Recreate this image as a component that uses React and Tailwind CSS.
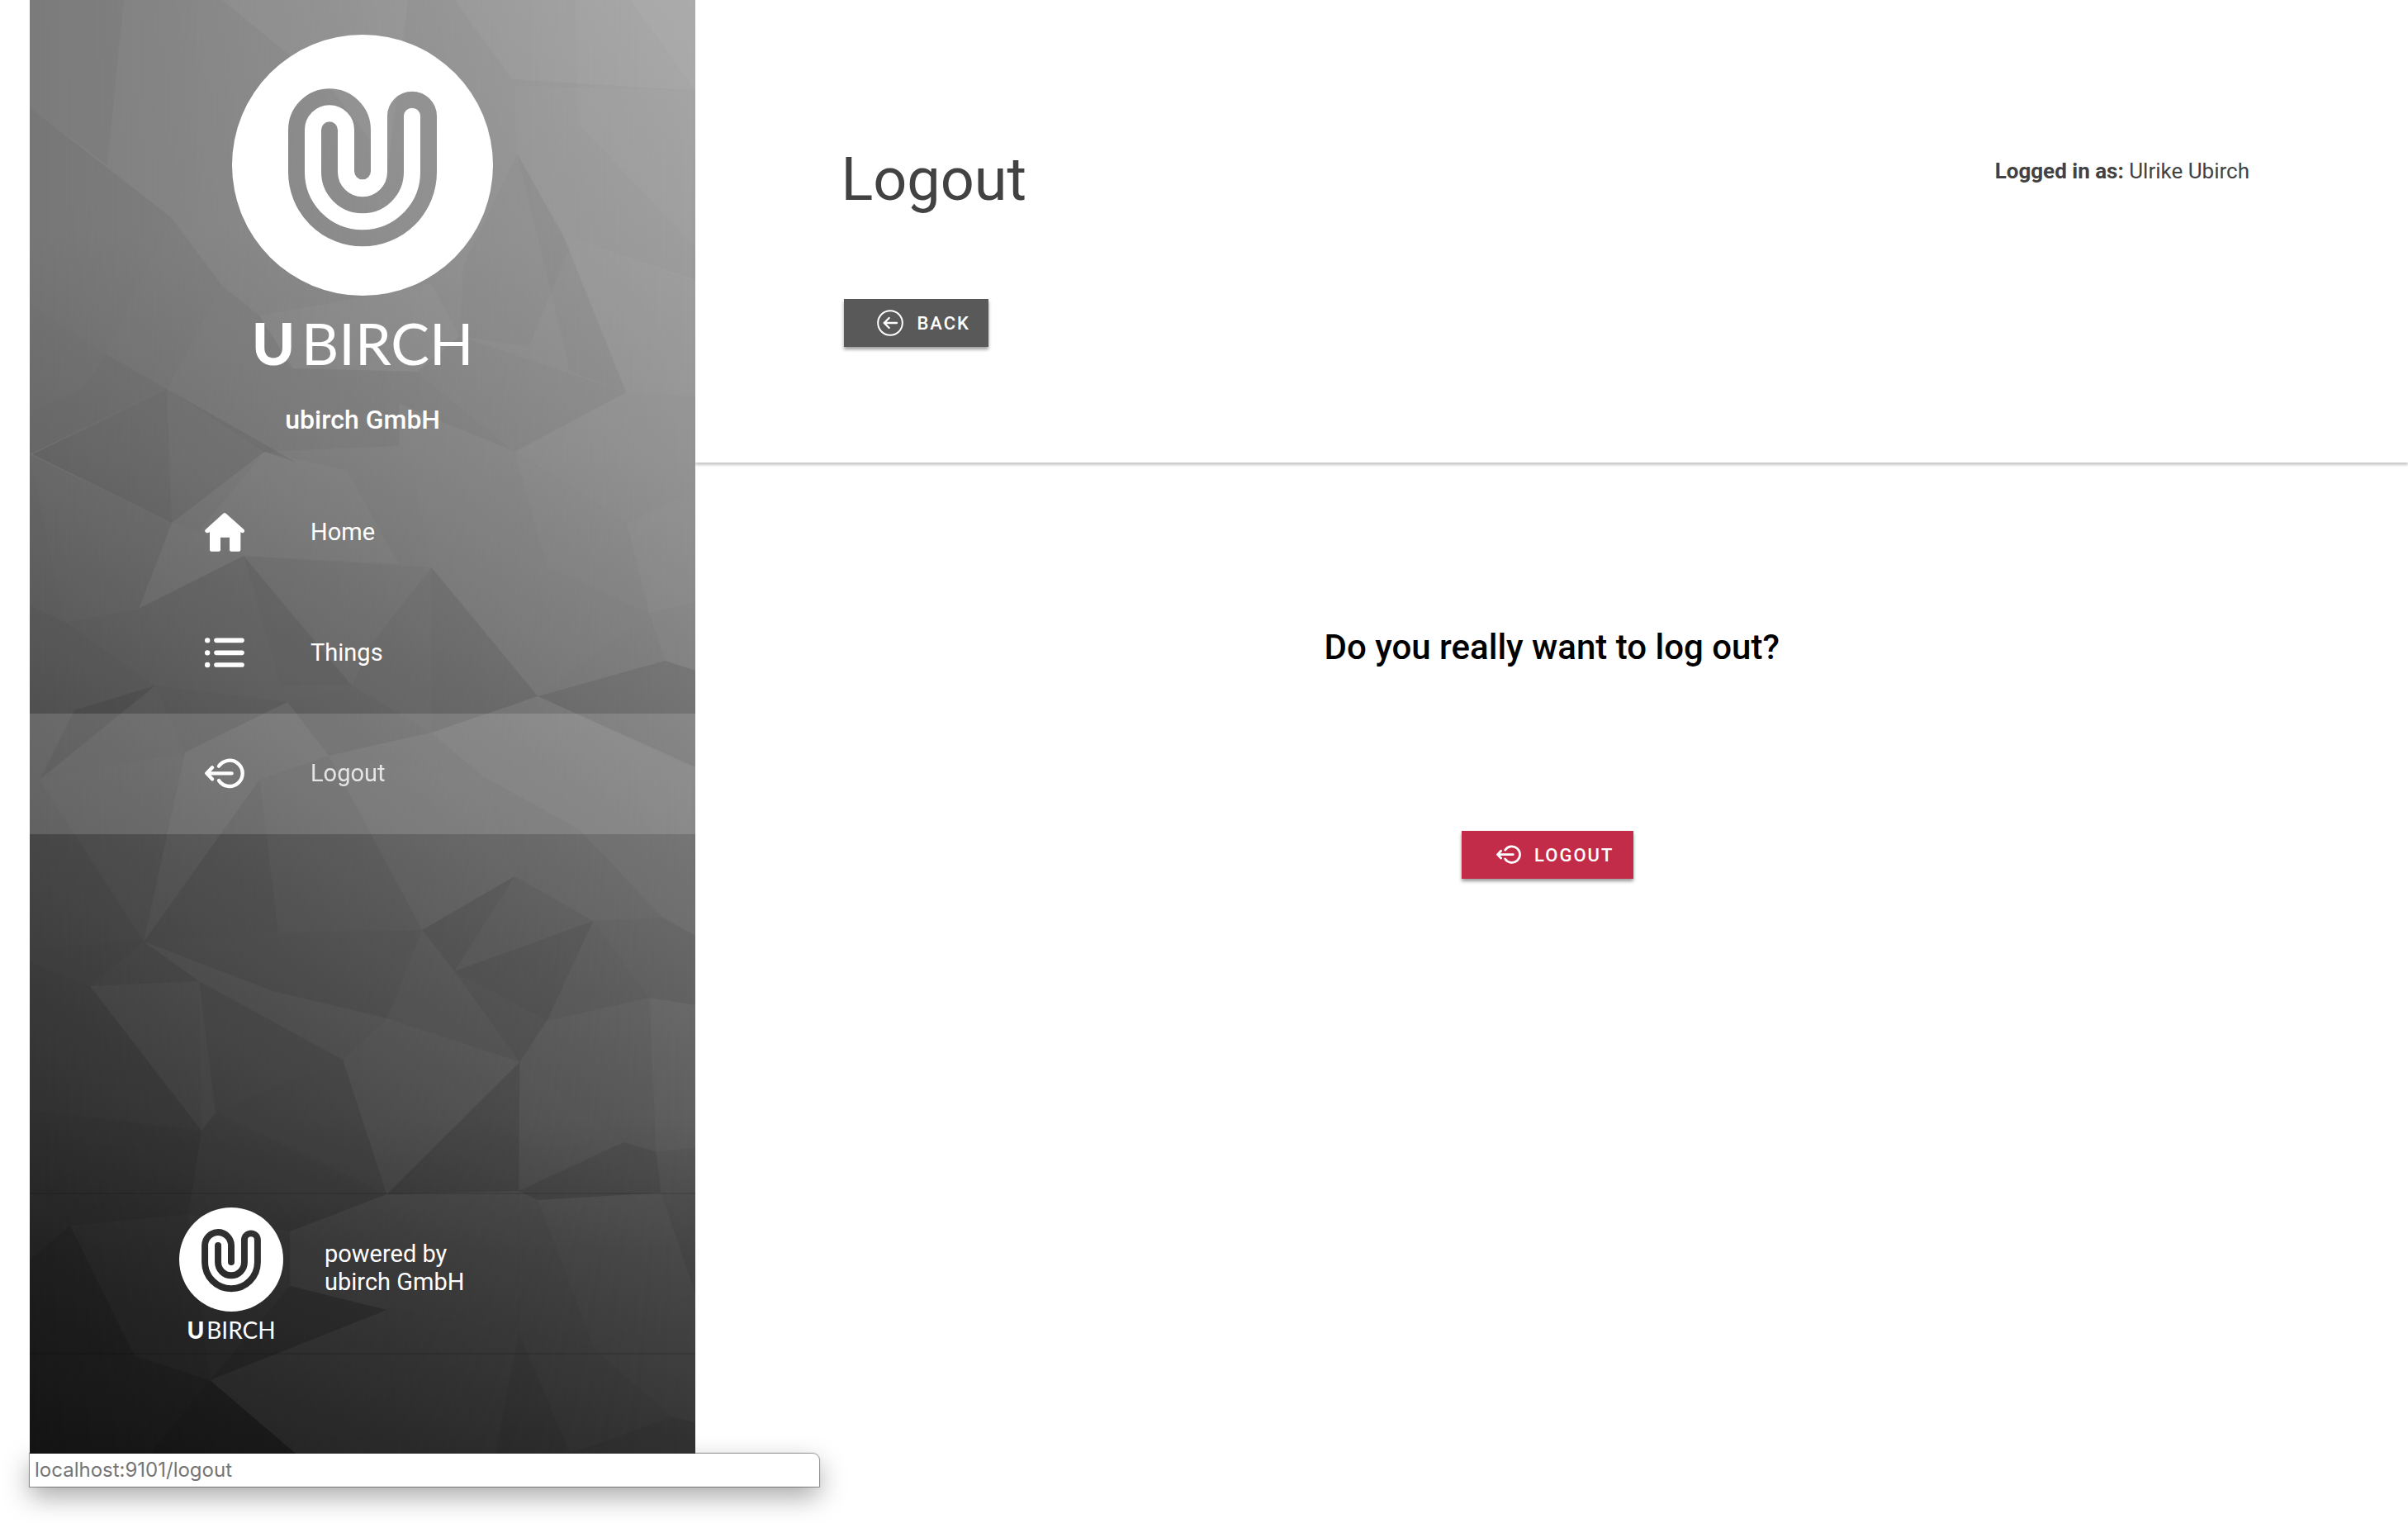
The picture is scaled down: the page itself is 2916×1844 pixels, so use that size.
import React from "react";

// Facets of the low-poly backdrop: [polygon points, tone], tone < 0 darkens.
const FACETS = [
  ["36,130 208,264 129,429 36,368", -4],
  ["208,264 269,346 202,471 129,429", -3],
  ["269,0 494,0 470,200 404,111", 3],
  ["36,0 150,0 130,200 36,130", -2],
  ["550,0 842,0 842,110 620,96", 3],
  ["763,0 842,0 842,110", 4],
  ["696,0 763,0 842,110 842,300 700,150", 2],
  ["623,104 842,110 836,339 682,286 626,186", 2],
  ["682,286 842,339 842,480 758,475", 3],
  ["682,286 758,475 690,450 626,186", -1],
  ["561,321 626,186 690,300 640,420 556,407", -1],
  ["432,361 522,343 556,407 505,450 354,446 314,382", 2],
  ["269,346 314,382 354,446 320,547 202,471", -2],
  ["36,368 129,429 100,470 36,500", -4],
  ["129,429 202,471 36,550 36,500 100,470", -5],
  ["202,471 359,560 320,547 208,633 39,550", -4],
  ["202,471 208,633 39,550", -2],
  ["354,446 505,450 483,489 483,540 320,547", -2],
  ["556,407 758,475 623,547 505,450", -1],
  ["505,450 623,547 483,489", -2],
  ["758,475 842,480 842,593 758,633 623,547", 2],
  ["483,489 623,547 662,687 522,687", 0.5],
  ["36,550 208,633 168,737 79,753", -3],
  ["36,550 79,753 36,733", -4],
  ["208,633 241,643 295,673 168,737", 1],
  ["320,547 420,570 483,683 295,673 241,643", 2],
  ["168,737 295,673 426,830 348,850 188,830", -4],
  ["295,673 426,830 340,830", -1],
  ["36,733 79,753 188,830 90,860 36,830", -5],
  ["79,753 168,737 188,830", -4],
  ["36,830 90,860 188,830 48,944 36,944", -5],
  ["522,687 522,887 426,830 449,780", -3],
  ["522,687 651,843 522,887", -4],
  ["295,673 522,687 449,780 426,830", -1],
  ["522,687 662,687 786,743 651,843", 0.5],
  ["662,687 623,547 758,633 786,743", 1.5],
  ["758,633 842,593 842,730 786,743", 3],
  ["786,743 842,730 842,812 805,800", 2],
  ["651,843 805,800 842,812 842,929", -4],
  ["188,830 348,850 224,911", -5],
  ["188,830 224,911 48,944 90,860", -4],
  ["348,850 426,830 522,887 398,915", -4],
  ["224,911 174,1140 48,944", -3],
  ["314,944 337,1129 174,1140", -4],
  ["314,944 398,915 511,1126 337,1129", -2],
  ["36,944 48,944 174,1140 36,1147", -5],
  ["398,915 584,940 623,1061 511,1126", 0.5],
  ["522,887 651,843 836,929 701,1004 584,940", 2],
  ["701,1004 836,929 842,1133 802,1111", 2],
  ["511,1126 623,1061 550,1176", -4],
  ["623,1061 718,1115 550,1176", -2],
  ["718,1115 662,1236 550,1176", -5],
  ["718,1115 786,1208 662,1236", -2],
  ["718,1115 802,1111 842,1133 842,1217 786,1208", -1],
  ["36,1147 174,1140 109,1194 36,1165", -5],
  ["174,1140 337,1129 469,1233 330,1200", -3],
  ["174,1140 241,1188 109,1194", -4],
  ["337,1129 511,1126 469,1233", -3],
  ["511,1126 550,1176 469,1233", -1],
  ["36,1165 109,1194 244,1369 36,1344", -6],
  ["109,1194 241,1188 244,1369", -1],
  ["241,1188 415,1283 261,1347", -3],
  ["261,1347 415,1283 468,1446", -3],
  ["469,1233 629,1286 468,1446 415,1283", 1],
  ["469,1233 550,1176 662,1236 629,1286", -1],
  ["550,1176 662,1236 629,1286", -2],
  ["629,1286 628,1442 468,1446", -4],
  ["629,1286 755,1383 628,1442", 0.5],
  ["755,1383 651,1453 628,1442", -3],
  ["786,1208 842,1217 842,1390 794,1394", 2],
  ["755,1383 794,1394 800,1444 651,1453", -3],
  ["36,1344 244,1369 228,1470 85,1484 36,1439", -7],
  ["261,1347 468,1446 351,1491 228,1470 244,1369", -4],
  ["85,1484 228,1470 254,1671 163,1642", -4],
  ["36,1439 85,1484 36,1525", -6],
  ["36,1525 85,1484 163,1642 36,1647", -9],
  ["228,1470 351,1491 351,1557 254,1671", -2],
  ["351,1491 468,1446 468,1586 351,1557", 1.5],
  ["468,1446 628,1442 628,1614 468,1586", 1],
  ["628,1442 651,1453 719,1633 628,1614", 1],
  ["651,1453 800,1444 842,1567 719,1633", 2],
  ["351,1557 468,1586 254,1671", -5],
  ["36,1647 163,1642 254,1671 182,1760 36,1760", -8],
  ["254,1671 358,1760 182,1760", -10],
  ["254,1671 468,1586 481,1760 358,1760", 1],
  ["468,1586 628,1614 600,1760 481,1760", 1],
  ["628,1614 719,1633 813,1716 690,1760", 1],
  ["719,1633 842,1567 842,1722 813,1716", 2],
];

// The gradient gets darker downwards, so dark facets need more weight there.
function facetOpacity(points, tone) {
  const y = Number(points.split(" ")[0].split(",")[1]);
  return tone < 0 ? -tone * (0.012 + 0.016 * (y / 1760)) : tone * 0.014;
}

function Backdrop() {
  return (
    <svg
      className="absolute inset-0 -z-10 h-full w-full"
      viewBox="36 0 806 1760"
      preserveAspectRatio="none"
      aria-hidden="true"
    >
      <defs>
        <linearGradient id="bg-left" x1="0" y1="0" x2="0" y2="1">
          <stop offset="0" stopColor="#7e7e7e" />
          <stop offset="0.16" stopColor="#7e7e7e" />
          <stop offset="0.31" stopColor="#707070" />
          <stop offset="0.49" stopColor="#595959" />
          <stop offset="0.65" stopColor="#474747" />
          <stop offset="0.77" stopColor="#393939" />
          <stop offset="0.86" stopColor="#292929" />
          <stop offset="1" stopColor="#1a1a1a" />
        </linearGradient>
        <linearGradient id="bg-right" x1="0" y1="0" x2="0" y2="1">
          <stop offset="0" stopColor="#a4a4a4" />
          <stop offset="0.16" stopColor="#9c9c9c" />
          <stop offset="0.31" stopColor="#919191" />
          <stop offset="0.49" stopColor="#7d7d7d" />
          <stop offset="0.65" stopColor="#6a6a6a" />
          <stop offset="0.77" stopColor="#5b5b5b" />
          <stop offset="0.86" stopColor="#454545" />
          <stop offset="1" stopColor="#303030" />
        </linearGradient>
        <linearGradient id="bg-fade" x1="0" y1="0" x2="1" y2="0">
          <stop offset="0" stopColor="#000" />
          <stop offset="1" stopColor="#fff" />
        </linearGradient>
        <mask id="bg-mask" style={{ maskType: "luminance" }}>
          <rect x="36" width="806" height="1760" fill="url(#bg-fade)" />
        </mask>
      </defs>
      <rect x="36" width="806" height="1760" fill="url(#bg-left)" />
      <rect x="36" width="806" height="1760" fill="url(#bg-right)" mask="url(#bg-mask)" />
      {FACETS.map(([points, tone]) => (
        <polygon
          key={points}
          points={points}
          fill={tone < 0 ? "#000" : "#fff"}
          fillOpacity={facetOpacity(points, tone)}
        />
      ))}
    </svg>
  );
}

function Mark({ id, className }) {
  return (
    <svg className={className} viewBox="63 36 948 948" aria-hidden="true">
      <mask id={id}>
        <circle cx="537" cy="510" r="474" fill="#fff" />
        <path
          d="M417 382V535A120 120 0 0 0 657 535V332A60 60 0 0 1 777 332V535A240 240 0 0 1 297 535V382A120 120 0 0 1 537 382V532"
          fill="none"
          stroke="#000"
          strokeWidth="60"
          strokeLinecap="round"
        />
      </mask>
      <rect x="63" y="36" width="948" height="948" fill="#fff" mask={`url(#${id})`} />
    </svg>
  );
}

function HomeIcon() {
  return (
    <svg className="size-12" viewBox="144 122 144 144" fill="currentColor" aria-hidden="true">
      <path d="M211 124q5-4 10 0l64 57q5 5 2 10t-9 3l-4-2v64q0 6-6 6h-28q-6 0-6-6v-45h-33v45q0 6-6 6h-27q-6 0-6-6v-64l-6 2q-6 2-10-3t2-10z" />
    </svg>
  );
}

function ListIcon() {
  return (
    <svg className="size-12" viewBox="144 560 144 144" aria-hidden="true">
      <g stroke="currentColor" strokeLinecap="round">
        <path d="M153.500 585v.1M153.500 630v.1M153.500 674v.1" strokeWidth="19" />
        <path d="M186 585H279M186 630H279M186 674H279" strokeWidth="17" />
      </g>
    </svg>
  );
}

function LogoutIcon({ className }) {
  return (
    <svg className={className} viewBox="144 998 144 144" fill="none" aria-hidden="true">
      <g stroke="currentColor" strokeWidth="13" strokeLinecap="round" strokeLinejoin="round">
        <path d="M195 1042A47 47 0 1 1 195 1094" />
        <path d="M153 1068H242M171 1047L151 1068L171 1089" />
      </g>
    </svg>
  );
}

function BackIcon() {
  return (
    <svg className="size-8" viewBox="246 675 96 96" fill="none" aria-hidden="true">
      <g stroke="currentColor" strokeLinecap="round" strokeLinejoin="round">
        <circle cx="294" cy="723" r="44.500" strokeWidth="6" />
        <path d="M272 723H318M290 705L272 723L290 741" strokeWidth="7" />
      </g>
    </svg>
  );
}

const NAV = [
  { label: "Home", icon: <HomeIcon /> },
  { label: "Things", icon: <ListIcon /> },
  { label: "Logout", icon: <LogoutIcon className="size-12" />, active: true },
];

export default function App() {
  return (
    <div className="flex min-h-screen flex-col bg-white pb-11 pl-9 font-['Roboto',sans-serif] text-[#424242]">
      <div className="flex flex-1">
        <aside className="relative isolate z-10 flex w-[28%] flex-col text-white">
          <Backdrop />
          <div className="flex flex-col items-center pt-[42px]">
            <Mark id="mark-large" className="size-[316px]" />
            <p className="mt-5 font-['Lato',sans-serif] text-[70px] leading-[74px]">
              <span className="mr-2 font-black">U</span>BIRCH
            </p>
            <h2 className="mt-9 text-[32px] leading-10 font-medium">ubirch GmbH</h2>
          </div>
          <nav className="mt-11">
            {NAV.map(({ label, icon, active }) => (
              <a
                key={label}
                href={`#${label.toLowerCase()}`}
                aria-current={active ? "page" : undefined}
                className={`flex h-[146px] items-center gap-20 pl-[212px] text-[29px] ${active ? "bg-white/15" : ""}`}
              >
                {icon}
                <span className={active ? "opacity-80" : ""}>{label}</span>
              </a>
            ))}
          </nav>
          <footer className="mt-auto mb-[120px] flex gap-[50px] border-y-2 border-black/10 pt-4 pl-[181px]">
            <div className="flex flex-col items-center">
              <Mark id="mark-small" className="size-[126px]" />
              <p className="mt-[6px] mb-3 font-['Lato',sans-serif] text-[28px] leading-8">
                <span className="mr-[3px] font-black">U</span>BIRCH
              </p>
            </div>
            <p className="pt-[39px] text-[29px] leading-[34px]">
              powered by
              <br />
              ubirch GmbH
            </p>
          </footer>
        </aside>
        <div className="flex flex-1 flex-col">
          <header className="flex h-[560px] items-start justify-between pr-48 pl-[180px] shadow-[0_3px_3px_rgba(0,0,0,0.22)]">
            <div className="pt-[170px]">
              <h1 className="-ml-1 text-[72px] leading-[96px]">Logout</h1>
              <button
                type="button"
                className="mt-24 flex h-[58px] items-center gap-4 bg-[#595959] pr-[22px] pl-10 text-[22px] font-medium tracking-[2px] text-white shadow-[0_3px_4px_rgba(0,0,0,0.4)]"
              >
                <BackIcon />
                BACK
              </button>
            </div>
            <p className="pt-[189px] text-[26px] leading-9">
              <b>Logged in as:</b> Ulrike Ubirch
            </p>
          </header>
          <main className="flex flex-col items-center pt-[196px] text-black">
            <h2 className="text-[42px] leading-14 font-medium">Do you really want to log out?</h2>
            <button
              type="button"
              className="mt-[194px] mr-[10px] flex h-[58px] items-center gap-4 bg-[#c32c48] pr-6 pl-[42px] text-[22px] font-medium tracking-[2px] text-white shadow-[0_3px_4px_rgba(0,0,0,0.4)]"
            >
              <LogoutIcon className="size-[30px]" />
              LOGOUT
            </button>
          </main>
        </div>
      </div>
      <div
        role="status"
        className="h-10 w-[33.2%] rounded-tr-lg bg-white px-[6px] font-['Inter',sans-serif] text-[24px] leading-10 text-[#757575] shadow-[0_0_1px_1px_rgba(0,0,0,0.4),0_12px_32px_rgba(0,0,0,0.35)]"
      >
        localhost:9101/logout
      </div>
    </div>
  );
}
